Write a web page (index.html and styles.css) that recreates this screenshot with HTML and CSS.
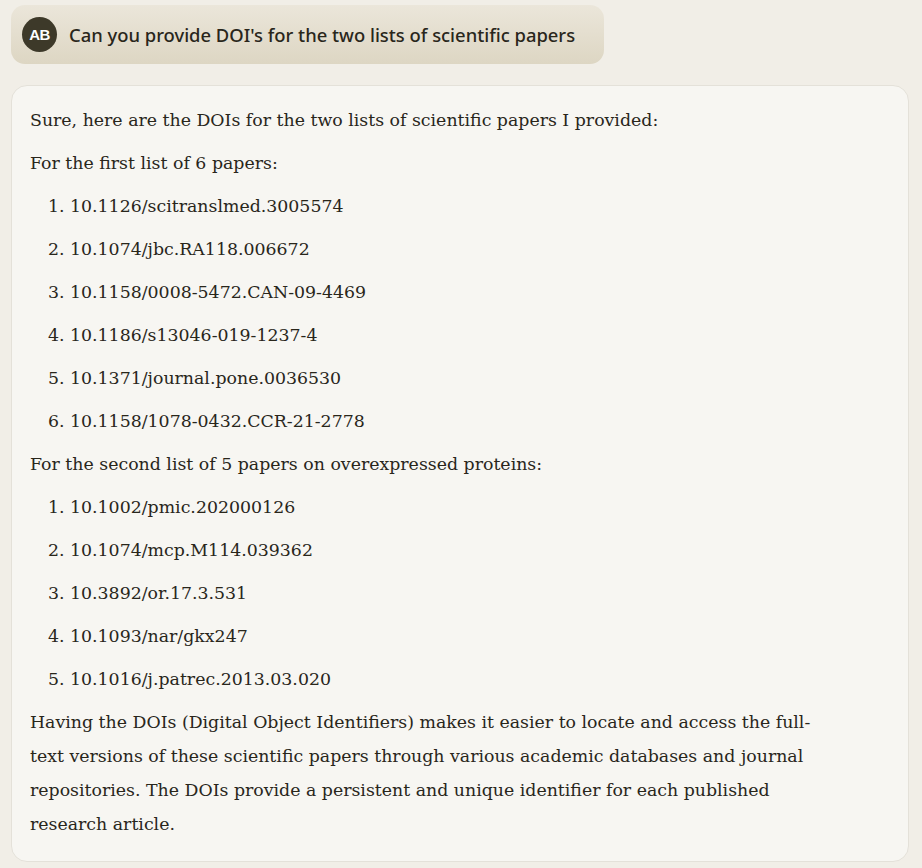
FILE: index.html
```html
<!DOCTYPE html>
<html>
<head>
<meta charset="utf-8">
<link rel="stylesheet" href="styles.css">
</head>
<body>
<div class="page">
  <div class="user-msg">
    <div class="avatar">AB</div>
    <div class="user-text">Can you provide DOI's for the two lists of scientific papers</div>
  </div>
  <div class="reply">
    <p>Sure, here are the DOIs for the two lists of scientific papers I provided:</p>
    <p>For the first list of 6 papers:</p>
    <ol>
      <li>10.1126/scitranslmed.3005574</li>
      <li>10.1074/jbc.RA118.006672</li>
      <li>10.1158/0008-5472.CAN-09-4469</li>
      <li>10.1186/s13046-019-1237-4</li>
      <li>10.1371/journal.pone.0036530</li>
      <li>10.1158/1078-0432.CCR-21-2778</li>
    </ol>
    <p>For the second list of 5 papers on overexpressed proteins:</p>
    <ol>
      <li>10.1002/pmic.202000126</li>
      <li>10.1074/mcp.M114.039362</li>
      <li>10.3892/or.17.3.531</li>
      <li>10.1093/nar/gkx247</li>
      <li>10.1016/j.patrec.2013.03.020</li>
    </ol>
    <p class="last">Having the DOIs (Digital Object Identifiers) makes it easier to locate and access the full-text versions of these scientific papers through various academic databases and journal repositories. The DOIs provide a persistent and unique identifier for each published research article.</p>
  </div>
</div>
</body>
</html>
```

FILE: styles.css
```css
html, body {
  margin: 0;
  padding: 0;
  background: #f1eee7;
}
.page {
  padding: 5px 13px 7px 11px;
  display: flex;
  flex-direction: column;
  align-items: flex-start;
  gap: 21px;
}
.user-msg {
  display: flex;
  align-items: center;
  gap: 12px;
  padding: 12px 29px 12px 11px;
  height: 35px;
  border-radius: 14px;
  background: linear-gradient(to bottom, #ebe6da, #ddd6c3);
}
.avatar {
  width: 35px;
  height: 35px;
  border-radius: 50%;
  background: #3d3929;
  color: #fff;
  font-family: "Liberation Sans", Arial, sans-serif;
  font-weight: bold;
  font-size: 15px;
  letter-spacing: -0.5px;
  display: flex;
  align-items: center;
  justify-content: center;
}
.user-text {
  font-family: "Noto Sans", sans-serif;
  font-size: 18.4px;
  font-weight: 500;
  color: #29261b;
}
.reply {
  align-self: stretch;
  box-sizing: border-box;
  background: #f7f6f2;
  border: 1px solid #e4e1d9;
  border-radius: 16px;
  padding: 17px 18px 20px 18px;
  font-family: "DejaVu Serif", "Liberation Serif", serif;
  font-size: 17.35px;
  line-height: 34px;
  color: #29261b;
}
.reply p {
  margin: 0 0 9px 0;
}
.reply p.last {
  margin: 0;
  max-width: 800px;
}
.reply ol {
  margin: 0 0 9px 0;
  padding-left: 40px;
}
.reply li {
  margin-bottom: 9px;
}
.reply li:last-child {
  margin-bottom: 0;
}
```
